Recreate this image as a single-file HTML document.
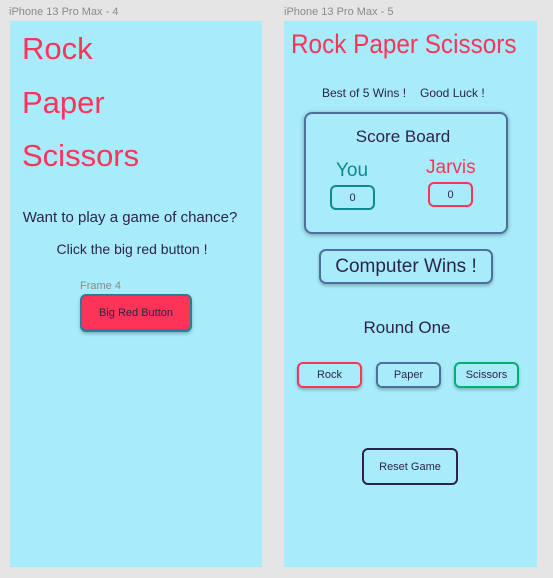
<!DOCTYPE html>
<html><head><style>
*{margin:0;padding:0;box-sizing:border-box}
body{width:553px;height:578px;background:#e5e5e5;position:relative;overflow:hidden;font-family:"Liberation Sans",sans-serif;color:#2d2448}
.a{position:absolute;white-space:nowrap}
.f{position:absolute;background:#a8ecfb;top:21px;height:546px}
.lbl{font-size:11px;color:#8a8a8a}
.c{text-align:center;transform:translateX(-50%)}
.red{color:#fe3358}
.b{position:absolute;border-radius:6px;display:flex;align-items:center;justify-content:center;font-size:11px;box-shadow:0 2px 3px rgba(0,0,0,.25)}
</style></head><body>
<div class="a lbl" style="left:9px;top:6px">iPhone 13 Pro Max - 4</div>
<div class="a lbl" style="left:284px;top:6px">iPhone 13 Pro Max - 5</div>
<div class="f" style="left:10px;width:252px"></div>
<div class="f" style="left:284px;width:253px"></div>

<div class="a red" style="left:22px;top:31px;font-size:31px">Rock</div>
<div class="a red" style="left:22px;top:85px;font-size:31px">Paper</div>
<div class="a red" style="left:22px;top:138px;font-size:31px">Scissors</div>
<div class="a c" style="left:130px;top:209px;font-size:15px">Want to play a game of chance?</div>
<div class="a c" style="left:132px;top:241px;font-size:14px">Click the big red button !</div>
<div class="a lbl" style="left:80px;top:280px">Frame 4</div>
<div class="b" style="left:80px;top:294px;width:112px;height:38px;background:#fe3358;border:2px solid #2a7f94;border-bottom-width:3px">Big Red Button</div>

<div class="a red" style="left:291px;top:29px;font-size:27px;transform:scaleX(0.9);transform-origin:left">Rock Paper Scissors</div>
<div class="a" style="left:322px;top:86px;font-size:12px">Best of 5 Wins !</div>
<div class="a" style="left:420px;top:86px;font-size:12px">Good Luck !</div>
<div class="b" style="left:304px;top:112px;width:204px;height:122px;border:2px solid #4e6f9a;border-radius:8px;box-shadow:0 1px 5px rgba(0,0,0,.35)"></div>
<div class="a c" style="left:403px;top:127px;font-size:17px">Score Board</div>
<div class="a" style="left:336px;top:160px;font-size:19px;color:#0e8a8f">You</div>
<div class="a red" style="left:426px;top:157px;font-size:19px">Jarvis</div>
<div class="b" style="left:330px;top:185px;width:45px;height:25px;border:2px solid #0e8a8f;box-shadow:none">0</div>
<div class="b" style="left:428px;top:182px;width:45px;height:25px;border:2px solid #fe3358;box-shadow:none">0</div>
<div class="b" style="left:319px;top:249px;width:174px;height:35px;border:2px solid #4e6f9a;border-radius:7px;font-size:19px">Computer Wins !</div>
<div class="a c" style="left:407px;top:318px;font-size:17px">Round One</div>
<div class="b" style="left:297px;top:362px;width:65px;height:26px;border:2px solid #fe3358">Rock</div>
<div class="b" style="left:376px;top:362px;width:65px;height:26px;border:2px solid #4e6f9a">Paper</div>
<div class="b" style="left:454px;top:362px;width:65px;height:26px;border:2px solid #00b070">Scissors</div>
<div class="b" style="left:362px;top:448px;width:96px;height:37px;border:2px solid #2d2448;box-shadow:none">Reset Game</div>
</body></html>
